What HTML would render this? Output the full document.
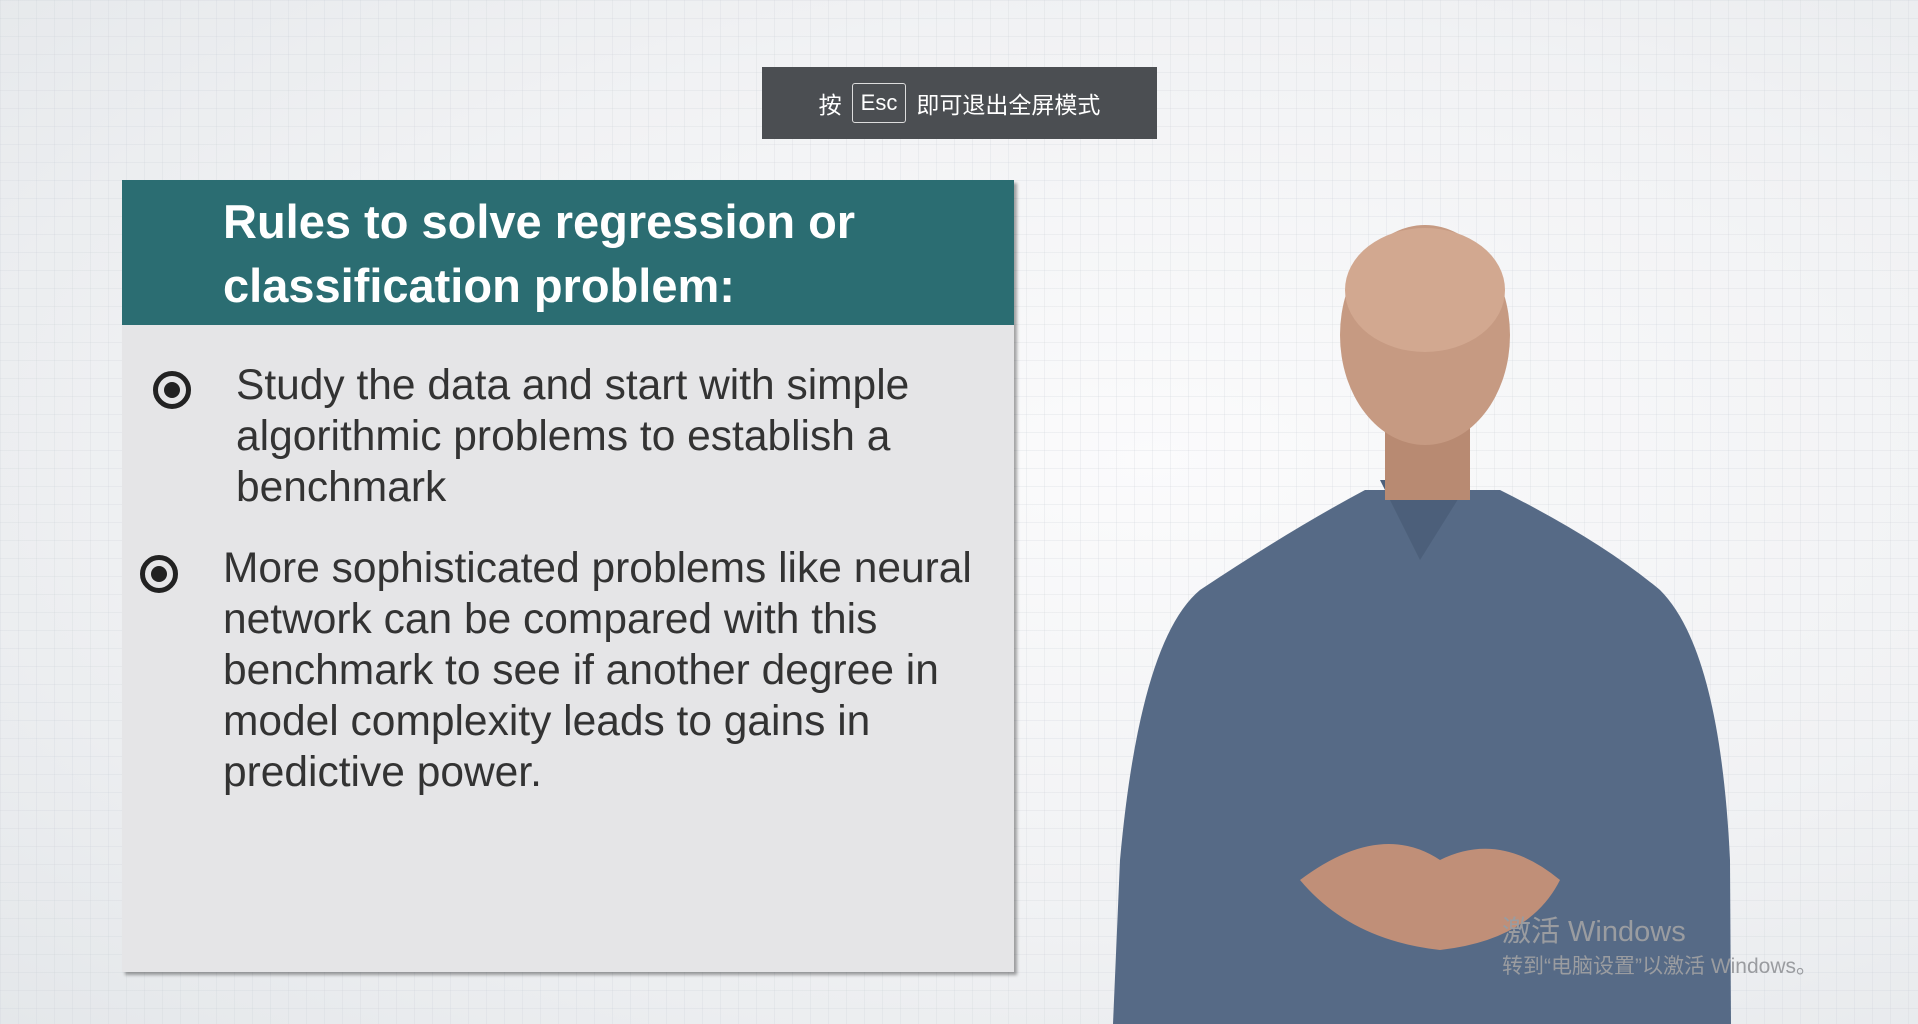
<!DOCTYPE html>
<html><head><meta charset="utf-8"><style>
html,body{margin:0;padding:0}
body{width:1918px;height:1024px;overflow:hidden;position:relative;font-family:"Liberation Sans","Noto Sans CJK SC",sans-serif;
background:radial-gradient(ellipse at 60% 45%,#fbfbfc 0%,#f1f2f4 55%,#e4e7ea 100%);}
.grid{position:absolute;inset:0;background-image:linear-gradient(rgba(200,205,212,.22) 1px,transparent 1px),linear-gradient(90deg,rgba(200,205,212,.22) 1px,transparent 1px);background-size:18px 18px;}
.toast{position:absolute;left:762px;top:67px;width:395px;height:72px;background:#4b4e52;color:#fff;font-size:23px;display:flex;align-items:center;justify-content:center;gap:10px}
.toast .k{border:1.5px solid #ddd;border-radius:3px;padding:6px 8px;font-size:22px}
.panel{position:absolute;left:122px;top:180px;width:892px;height:792px;background:#e5e5e7;box-shadow:3px 3px 3px rgba(0,0,0,.35)}
.head{height:145px;background:#2b6d72;color:#fff;font-weight:bold;font-size:47px;line-height:64px;padding:10px 0 0 101px;box-sizing:border-box}
.b{position:absolute;color:#333;font-size:42.5px;line-height:51px}
.dot{position:absolute;width:38px;height:38px;border:5px solid #222;border-radius:50%;box-sizing:border-box}
.dot:after{content:"";position:absolute;left:6px;top:6px;width:16px;height:16px;border-radius:50%;background:#222}
.wm{position:absolute;left:1502px;color:#9a9ca0}
</style></head><body>
<div class="grid"></div>
<svg style="position:absolute;left:0;top:0" width="1918" height="1024">
<path d="M1113 1024 L1120 860 Q1140 640 1200 590 Q1290 530 1365 490 L1500 490 Q1600 540 1660 590 Q1720 650 1730 860 L1731 1024 Z" fill="#566a86"/>
<path d="M1380 480 L1420 560 L1470 480 Z" fill="#4c5f7a"/>
<rect x="1385" y="420" width="85" height="80" fill="#b88a72"/>
<ellipse cx="1425" cy="335" rx="85" ry="110" fill="#c69a82"/>
<ellipse cx="1425" cy="290" rx="80" ry="62" fill="#d2a890"/>
<path d="M1300 880 Q1380 820 1440 860 Q1500 830 1560 880 Q1530 940 1440 950 Q1350 940 1300 880Z" fill="#c08f78"/>
</svg>
<div class="toast">按 <span class="k">Esc</span> 即可退出全屏模式</div>
<div class="panel">
<div class="head">Rules to solve regression or<br>classification problem:</div>
<div class="dot" style="left:31px;top:191px"></div>
<div class="b" style="left:114px;top:180px">Study the data and start with simple<br>algorithmic problems to establish a<br>benchmark</div>
<div class="dot" style="left:18px;top:375px"></div>
<div class="b" style="left:101px;top:363px">More sophisticated problems like neural<br>network can be compared with this<br>benchmark to see if another degree in<br>model complexity leads to gains in<br>predictive power.</div>
</div>
<div class="wm" style="top:908px;font-size:29px">激活 Windows</div>
<div class="wm" style="top:950px;font-size:21px">转到“电脑设置”以激活 Windows。</div>
</body></html>
